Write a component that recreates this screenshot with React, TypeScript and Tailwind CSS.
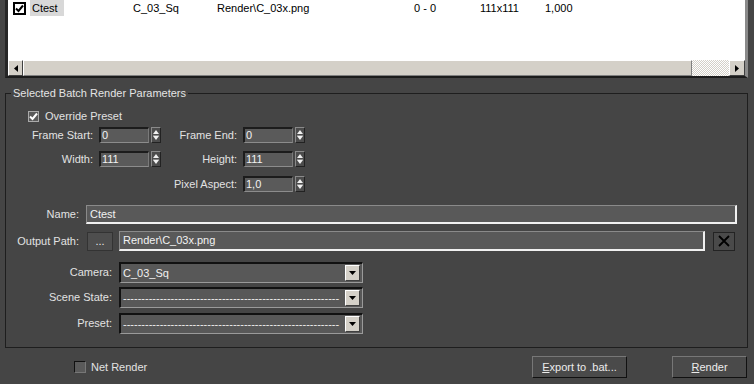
import React from "react";

const font = { fontFamily: '"Liberation Sans", Arial, sans-serif' };

function Spinner() {
  return (
    <div className="w-[10px] h-[16px] border border-t-[#8a8a8a] border-l-[#8a8a8a] border-b-[#222] border-r-[#222] bg-[#4c4c4c] flex flex-col items-center justify-between py-[2px]">
      <svg width="6" height="4" viewBox="0 0 6 4"><path d="M3 0 L6 4 L0 4 Z" fill="#f0f0f0" /></svg>
      <div className="w-[6px] h-px bg-[#888]" />
      <svg width="6" height="4" viewBox="0 0 6 4"><path d="M0 0 L6 0 L3 4 Z" fill="#f0f0f0" /></svg>
    </div>
  );
}

function SpinInput({ value }: { value: string }) {
  return (
    <div className="w-[50px] h-[16px] bg-[#5a5a5a] border-t-2 border-l-2 border-t-[#1c1c1c] border-l-[#1c1c1c] border-b border-r border-b-[#8c8c8c] border-r-[#7a7a7a] flex items-center pl-[1px] text-[#f2f2f2] text-[11px] leading-none">
      {value}
    </div>
  );
}

function Dropdown({ value, dashes }: { value?: string; dashes?: boolean }) {
  return (
    <div className="w-[244px] h-[21px] bg-[#585858] border-t-2 border-l-2 border-t-[#111] border-l-[#111] border-b border-r border-b-[#9a9a9a] border-r-[#9a9a9a] flex items-center pl-[2px] pr-[2px] gap-[1px]">
      <div className="flex-1 whitespace-nowrap text-[11px] leading-none text-[#f0f0f0]">
        {dashes ? "-".repeat(59) : value}
      </div>
      <div className="w-[15px] h-[16px] bg-[#d4d0c8] border border-t-white border-l-white border-b-[#404040] border-r-[#404040] flex items-center justify-center">
        <svg width="7" height="4" viewBox="0 0 7 4"><path d="M0 0 L7 0 L3.5 4 Z" fill="#000" /></svg>
      </div>
    </div>
  );
}

export default function App() {
  return (
    <div className="w-[754px] h-[384px] bg-[#454545] overflow-hidden text-[11px] text-[#e2e2e2]" style={font}>
      {/* List */}
      <div className="ml-[5px] w-[743px] h-[78px] border-l-[3px] border-l-[#262626] border-r-[3px] border-r-[#8a8a8a] border-b-2 border-b-[#1c1c1c] bg-white flex flex-col">
        <div className="h-[60px] text-black">
          <div className="h-[16px] flex items-center whitespace-nowrap">
            <div className="ml-[5px] w-[13px] h-[13px] border-2 border-black bg-white flex items-center justify-center">
              <svg width="9" height="9" viewBox="0 0 9 9"><path d="M1 4.5 L3.5 7 L8 1.5" stroke="#000" strokeWidth="2" fill="none" /></svg>
            </div>
            <div className="ml-[4px] w-[103px] h-[16px] flex">
              <span className="h-[16px] w-[34px] bg-[#d8d8d8] pl-[2px] flex items-center">Ctest</span>
            </div>
            <div className="w-[84px]">C_03_Sq</div>
            <div className="w-[197px]">Render\C_03x.png</div>
            <div className="w-[66px]">0 - 0</div>
            <div className="w-[65px]">111x111</div>
            <div>1,000</div>
          </div>
        </div>
        {/* scrollbar */}
        <div className="h-[16px] flex bg-[#d4d0c8]">
          <div className="w-[15px] h-[16px] bg-[#d4d0c8] border border-t-white border-l-white border-b-[#404040] border-r-[#404040] flex items-center justify-center">
            <svg width="4" height="7" viewBox="0 0 4 7"><path d="M4 0 L4 7 L0 3.5 Z" fill="#000" /></svg>
          </div>
          <div className="w-[669px] h-[16px] bg-[#d4d0c8] border border-t-white border-l-white border-b-[#808080] border-r-[#808080]" />
          <div className="flex-1 h-[16px] bg-[repeating-conic-gradient(#d4d0c8_0%_25%,#ffffff_0%_50%)] bg-[length:2px_2px]" />
          <div className="w-[16px] h-[16px] bg-[#d4d0c8] border border-t-white border-l-white border-b-[#404040] border-r-[#404040] flex items-center justify-center">
            <svg width="4" height="7" viewBox="0 0 4 7"><path d="M0 0 L4 3.5 L0 7 Z" fill="#000" /></svg>
          </div>
        </div>
      </div>

      {/* Group box */}
      <fieldset className="mt-[9px] ml-[5px] w-[743px] border border-[#1e1e1e] p-0 m-0 pb-[13px]">
        <legend className="ml-[5px] px-[2px] leading-[13px] text-[#e4e4e4]">Selected Batch Render Parameters</legend>

        <div className="mt-[9px] h-[14px] flex items-center">
          <div className="ml-[22px] w-[11px] h-[11px] bg-[#5a5a5a] border border-[#aaa] flex items-center justify-center">
            <svg width="9" height="9" viewBox="0 0 9 9"><path d="M1 4.5 L3.5 7 L8 1.5" stroke="#fff" strokeWidth="2" fill="none" /></svg>
          </div>
          <span className="ml-[6px]">Override Preset</span>
        </div>

        <div className="mt-[4px] h-[16px] flex items-center">
          <div className="w-[87px] text-right">Frame Start:</div>
          <div className="ml-[6px]"><SpinInput value="0" /></div>
          <div className="ml-[2px]"><Spinner /></div>
          <div className="w-[76px] text-right">Frame End:</div>
          <div className="ml-[6px]"><SpinInput value="0" /></div>
          <div className="ml-[2px]"><Spinner /></div>
        </div>

        <div className="mt-[8px] h-[16px] flex items-center">
          <div className="w-[87px] text-right">Width:</div>
          <div className="ml-[6px]"><SpinInput value="111" /></div>
          <div className="ml-[2px]"><Spinner /></div>
          <div className="w-[76px] text-right">Height:</div>
          <div className="ml-[6px]"><SpinInput value="111" /></div>
          <div className="ml-[2px]"><Spinner /></div>
        </div>

        <div className="mt-[9px] h-[16px] flex items-center">
          <div className="w-[231px] text-right">Pixel Aspect:</div>
          <div className="ml-[6px]"><SpinInput value="1,0" /></div>
          <div className="ml-[2px]"><Spinner /></div>
        </div>

        <div className="mt-[13px] h-[19px] flex items-center">
          <div className="w-[73px] text-right">Name:</div>
          <div className="ml-[7px] w-[651px] h-[19px] bg-[#595959] border-t border-l border-t-[#8a8a8a] border-l-[#8a8a8a] border-b-2 border-r-2 border-b-[#f0f0f0] border-r-[#f0f0f0] flex items-center pl-[3px] text-[#f2f2f2]">
            Ctest
          </div>
        </div>

        <div className="mt-[7px] h-[20px] flex items-center">
          <div className="w-[73px] text-right">Output Path:</div>
          <div className="ml-[8px] w-[26px] h-[19px] bg-[#4e4e4e] border border-[#333] flex items-center justify-center text-[#e8e8e8]">...</div>
          <div className="ml-[6px] w-[586px] h-[20px] bg-[#595959] border-t border-l border-t-[#8a8a8a] border-l-[#8a8a8a] border-b-2 border-r-2 border-b-[#f0f0f0] border-r-[#f0f0f0] flex items-center pl-[3px] text-[#f2f2f2]">
            Render\C_03x.png
          </div>
          <div className="ml-[8px] w-[22px] h-[19px] bg-[#4a4a4a] border border-[#232323] flex items-center justify-center">
            <svg width="12" height="12" viewBox="0 0 12 12"><path d="M1 1 L11 11 M11 1 L1 11" stroke="#000" strokeWidth="1.8" /></svg>
          </div>
        </div>

        <div className="mt-[11px] h-[21px] flex items-center">
          <div className="w-[106px] text-right">Camera:</div>
          <div className="ml-[7px]"><Dropdown value="C_03_Sq" /></div>
        </div>
        <div className="mt-[4px] h-[21px] flex items-center">
          <div className="w-[106px] text-right">Scene State:</div>
          <div className="ml-[7px]"><Dropdown dashes /></div>
        </div>
        <div className="mt-[5px] h-[21px] flex items-center">
          <div className="w-[106px] text-right">Preset:</div>
          <div className="ml-[7px]"><Dropdown dashes /></div>
        </div>
      </fieldset>

      {/* Bottom row */}
      <div className="mt-[8px] h-[22px] flex items-center">
        <div className="ml-[74px] w-[12px] h-[12px] border border-t-[#111] border-l-[#111] border-b-[#777] border-r-[#777] bg-[#5a5a5a]" />
        <span className="ml-[5px]">Net Render</span>
        <div className="ml-auto w-[95px] h-[22px] bg-[#4a4a4a] border border-t-[#777] border-l-[#777] border-b-[#111] border-r-[#111] flex items-center justify-center text-[#ececec]">
          <span><span className="underline">E</span>xport to .bat...</span>
        </div>
        <div className="ml-[45px] mr-[7px] w-[75px] h-[22px] bg-[#4a4a4a] border border-t-[#777] border-l-[#777] border-b-[#111] border-r-[#111] flex items-center justify-center text-[#ececec]">
          <span><span className="underline">R</span>ender</span>
        </div>
      </div>
    </div>
  );
}
